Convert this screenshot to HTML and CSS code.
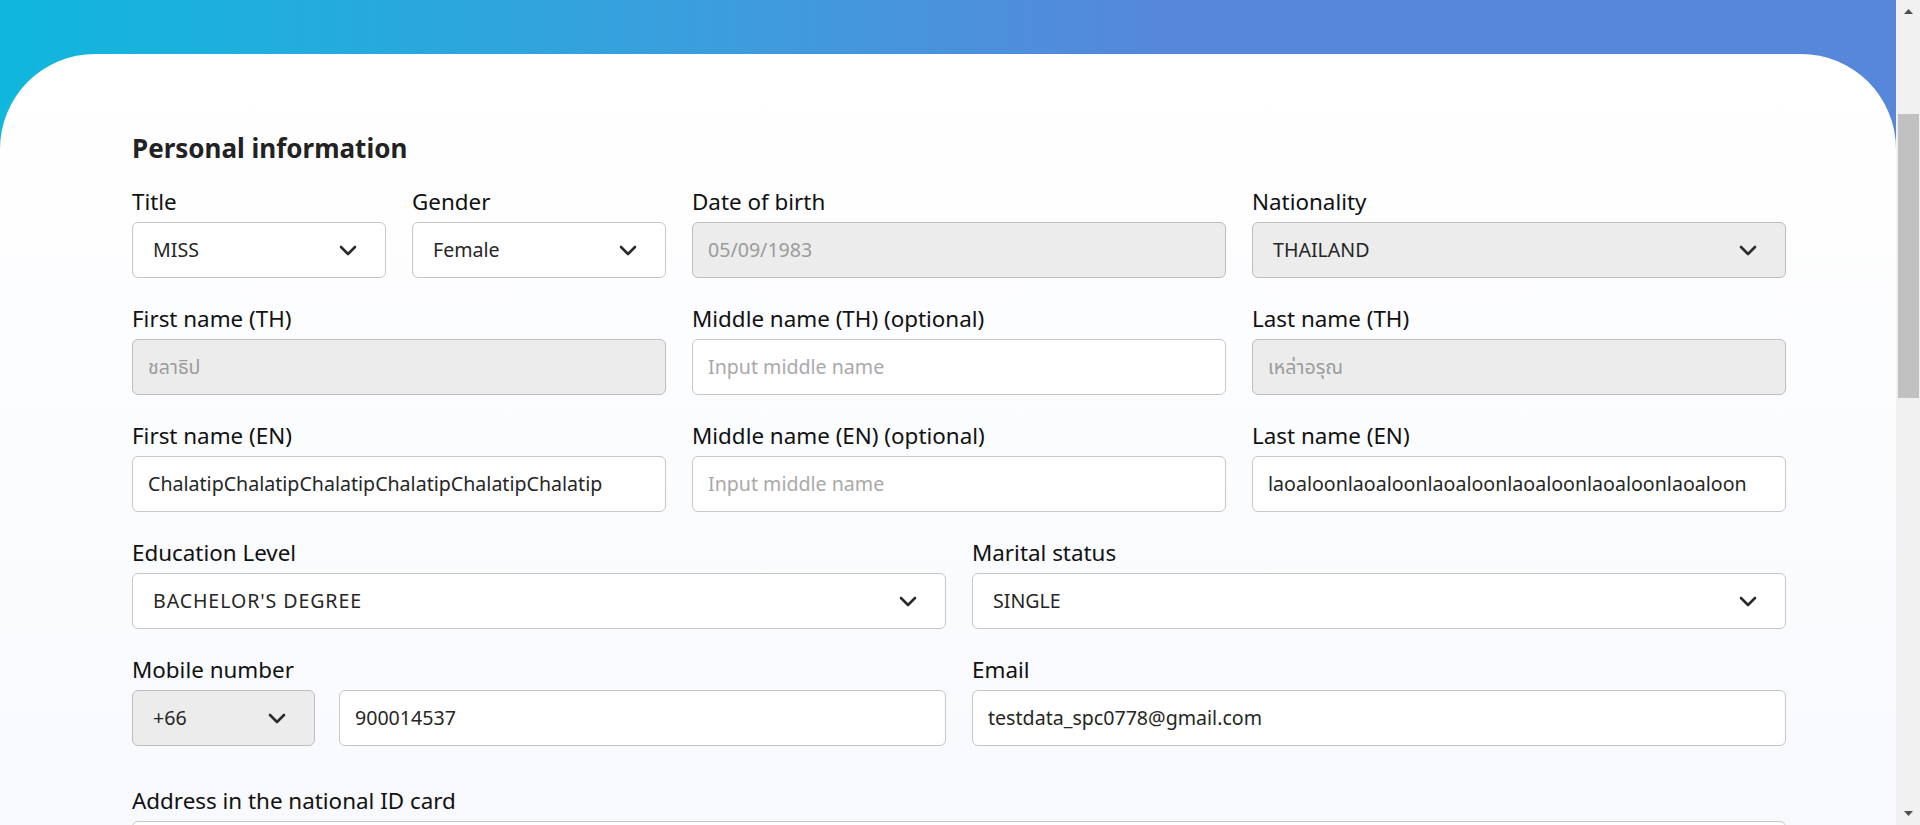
FILE: index.html
```html
<!DOCTYPE html>
<html lang="en">
<head>
<meta charset="utf-8">
<title>Personal information</title>
<link rel="stylesheet" href="styles.css">
</head>
<body>
<div class="shell">
  <div class="viewport">
    <div class="page">
      <header class="hero"></header>
      <main class="card">
        <section class="form">
          <h2 class="section-title">Personal information</h2>
          <div class="grid">
            <div class="field span-1">
              <label class="label">Title</label>
              <div class="control select"><span class="value">MISS</span><svg class="chev" viewBox="0 0 18 11" width="18" height="11"><path d="M2 2 L9 9 L16 2" fill="none" stroke="#2b2b2b" stroke-width="2.6" stroke-linecap="round" stroke-linejoin="round"/></svg></div>
            </div>
            <div class="field span-1">
              <label class="label">Gender</label>
              <div class="control select"><span class="value">Female</span><svg class="chev" viewBox="0 0 18 11" width="18" height="11"><path d="M2 2 L9 9 L16 2" fill="none" stroke="#2b2b2b" stroke-width="2.6" stroke-linecap="round" stroke-linejoin="round"/></svg></div>
            </div>
            <div class="field span-2">
              <label class="label">Date of birth</label>
              <div class="control text disabled"><span class="value muted">05/09/1983</span></div>
            </div>
            <div class="field span-2">
              <label class="label">Nationality</label>
              <div class="control select disabled"><span class="value">THAILAND</span><svg class="chev" viewBox="0 0 18 11" width="18" height="11"><path d="M2 2 L9 9 L16 2" fill="none" stroke="#2b2b2b" stroke-width="2.6" stroke-linecap="round" stroke-linejoin="round"/></svg></div>
            </div>

            <div class="field span-2">
              <label class="label">First name (TH)</label>
              <div class="control text disabled"><span class="value muted">ชลาธิป</span></div>
            </div>
            <div class="field span-2">
              <label class="label">Middle name (TH) (optional)</label>
              <div class="control text"><span class="value placeholder">Input middle name</span></div>
            </div>
            <div class="field span-2">
              <label class="label">Last name (TH)</label>
              <div class="control text disabled"><span class="value muted">เหล่าอรุณ</span></div>
            </div>

            <div class="field span-2">
              <label class="label">First name (EN)</label>
              <div class="control text"><span class="value">ChalatipChalatipChalatipChalatipChalatipChalatip</span></div>
            </div>
            <div class="field span-2">
              <label class="label">Middle name (EN) (optional)</label>
              <div class="control text"><span class="value placeholder">Input middle name</span></div>
            </div>
            <div class="field span-2">
              <label class="label">Last name (EN)</label>
              <div class="control text"><span class="value">laoaloonlaoaloonlaoaloonlaoaloonlaoaloonlaoaloon</span></div>
            </div>

            <div class="field span-3">
              <label class="label">Education Level</label>
              <div class="control select"><span class="value caps">BACHELOR'S DEGREE</span><svg class="chev" viewBox="0 0 18 11" width="18" height="11"><path d="M2 2 L9 9 L16 2" fill="none" stroke="#2b2b2b" stroke-width="2.6" stroke-linecap="round" stroke-linejoin="round"/></svg></div>
            </div>
            <div class="field span-3">
              <label class="label">Marital status</label>
              <div class="control select"><span class="value">SINGLE</span><svg class="chev" viewBox="0 0 18 11" width="18" height="11"><path d="M2 2 L9 9 L16 2" fill="none" stroke="#2b2b2b" stroke-width="2.6" stroke-linecap="round" stroke-linejoin="round"/></svg></div>
            </div>

            <div class="field span-3">
              <label class="label">Mobile number</label>
              <div class="phone">
                <div class="control select disabled"><span class="value">+66</span><svg class="chev" viewBox="0 0 18 11" width="18" height="11"><path d="M2 2 L9 9 L16 2" fill="none" stroke="#2b2b2b" stroke-width="2.6" stroke-linecap="round" stroke-linejoin="round"/></svg></div>
                <div class="control text"><span class="value">900014537</span></div>
              </div>
            </div>
            <div class="field span-3">
              <label class="label">Email</label>
              <div class="control text"><span class="value">testdata_spc0778@gmail.com</span></div>
            </div>

            <div class="field span-6 address">
              <label class="label">Address in the national ID card</label>
              <div class="control text"><span class="value">&nbsp;</span></div>
            </div>
          </div>
        </section>
      </main>
    </div>
  </div>
  <aside class="scrollbar">
    <div class="sb-btn"><svg viewBox="0 0 9 5" width="9" height="5"><polygon points="0,5 4.5,0 9,5" fill="#505050"/></svg></div>
    <div class="sb-track"><div class="sb-thumb"></div></div>
    <div class="sb-btn"><svg viewBox="0 0 9 5" width="9" height="5"><polygon points="0,0 9,0 4.5,5" fill="#505050"/></svg></div>
  </aside>
</div>
</body>
</html>
```

FILE: styles.css
```css
body {
  margin: 0;
  font-family: "Noto Sans", "Noto Sans Thai", "DejaVu Sans", sans-serif;
  color: #111;
  overflow: hidden;
}

.shell {
  display: flex;
  height: 100vh;
  overflow: hidden;
}

.viewport {
  flex: 1;
  min-width: 0;
  overflow: hidden;
}

.page {
  background: linear-gradient(90deg, #10b7dd 0%, #3c9ddd 38%, #5787db 62%, #5787db 100%);
}

.hero {
  height: 54px;
}

.card {
  min-height: 900px;
  box-sizing: border-box;
  padding: 77px 0 0 132px;
  border-radius: 95px 95px 0 0;
  background: linear-gradient(180deg, #ffffff 0px, #f7f9fd 800px, #f7f9fd 100%);
}

.form {
  width: 1654px;
}

.section-title {
  margin: 0 0 23px;
  font-size: 26px;
  line-height: 34px;
  font-weight: 700;
  color: #222;
}

.grid {
  display: grid;
  grid-template-columns: repeat(6, 1fr);
  column-gap: 26px;
  row-gap: 27px;
}

.span-1 { grid-column: span 1; }
.span-2 { grid-column: span 2; }
.span-3 { grid-column: span 3; }
.span-6 { grid-column: span 6; }

.address {
  margin-top: 14px;
}

.label {
  display: block;
  margin-bottom: 6px;
  font-size: 22.4px;
  line-height: 28px;
  color: #111;
  white-space: nowrap;
}

.control {
  display: flex;
  align-items: center;
  box-sizing: border-box;
  height: 56px;
  border: 1px solid #c7c7c7;
  border-radius: 6px;
  background: #fff;
  overflow: hidden;
}

.control.text {
  padding: 0 15px;
}

.control.select {
  justify-content: space-between;
  padding: 0 28px 0 20px;
}

.control.disabled {
  background: #ececec;
  border-color: #bdbdbd;
}

.value {
  font-size: 19.6px;
  line-height: 26px;
  color: #262626;
  white-space: nowrap;
}

.value.caps {
  letter-spacing: 0.9px;
}

.value.muted {
  color: #9b9b9b;
}

.value.placeholder {
  color: #a9a9a9;
}

.chev {
  flex: none;
  display: block;
}

.phone {
  display: grid;
  grid-template-columns: 183px 1fr;
  column-gap: 24px;
}

.scrollbar {
  flex: none;
  width: 24px;
  display: flex;
  flex-direction: column;
  background: #f1f1f1;
}

.sb-btn {
  flex: none;
  height: 23px;
  display: flex;
  align-items: center;
  justify-content: center;
}

.sb-btn svg {
  display: block;
}

.sb-track {
  flex: 1;
  padding-top: 91px;
}

.sb-thumb {
  height: 284px;
  margin: 0 1px 0 2px;
  background: #c1c1c1;
}
```
